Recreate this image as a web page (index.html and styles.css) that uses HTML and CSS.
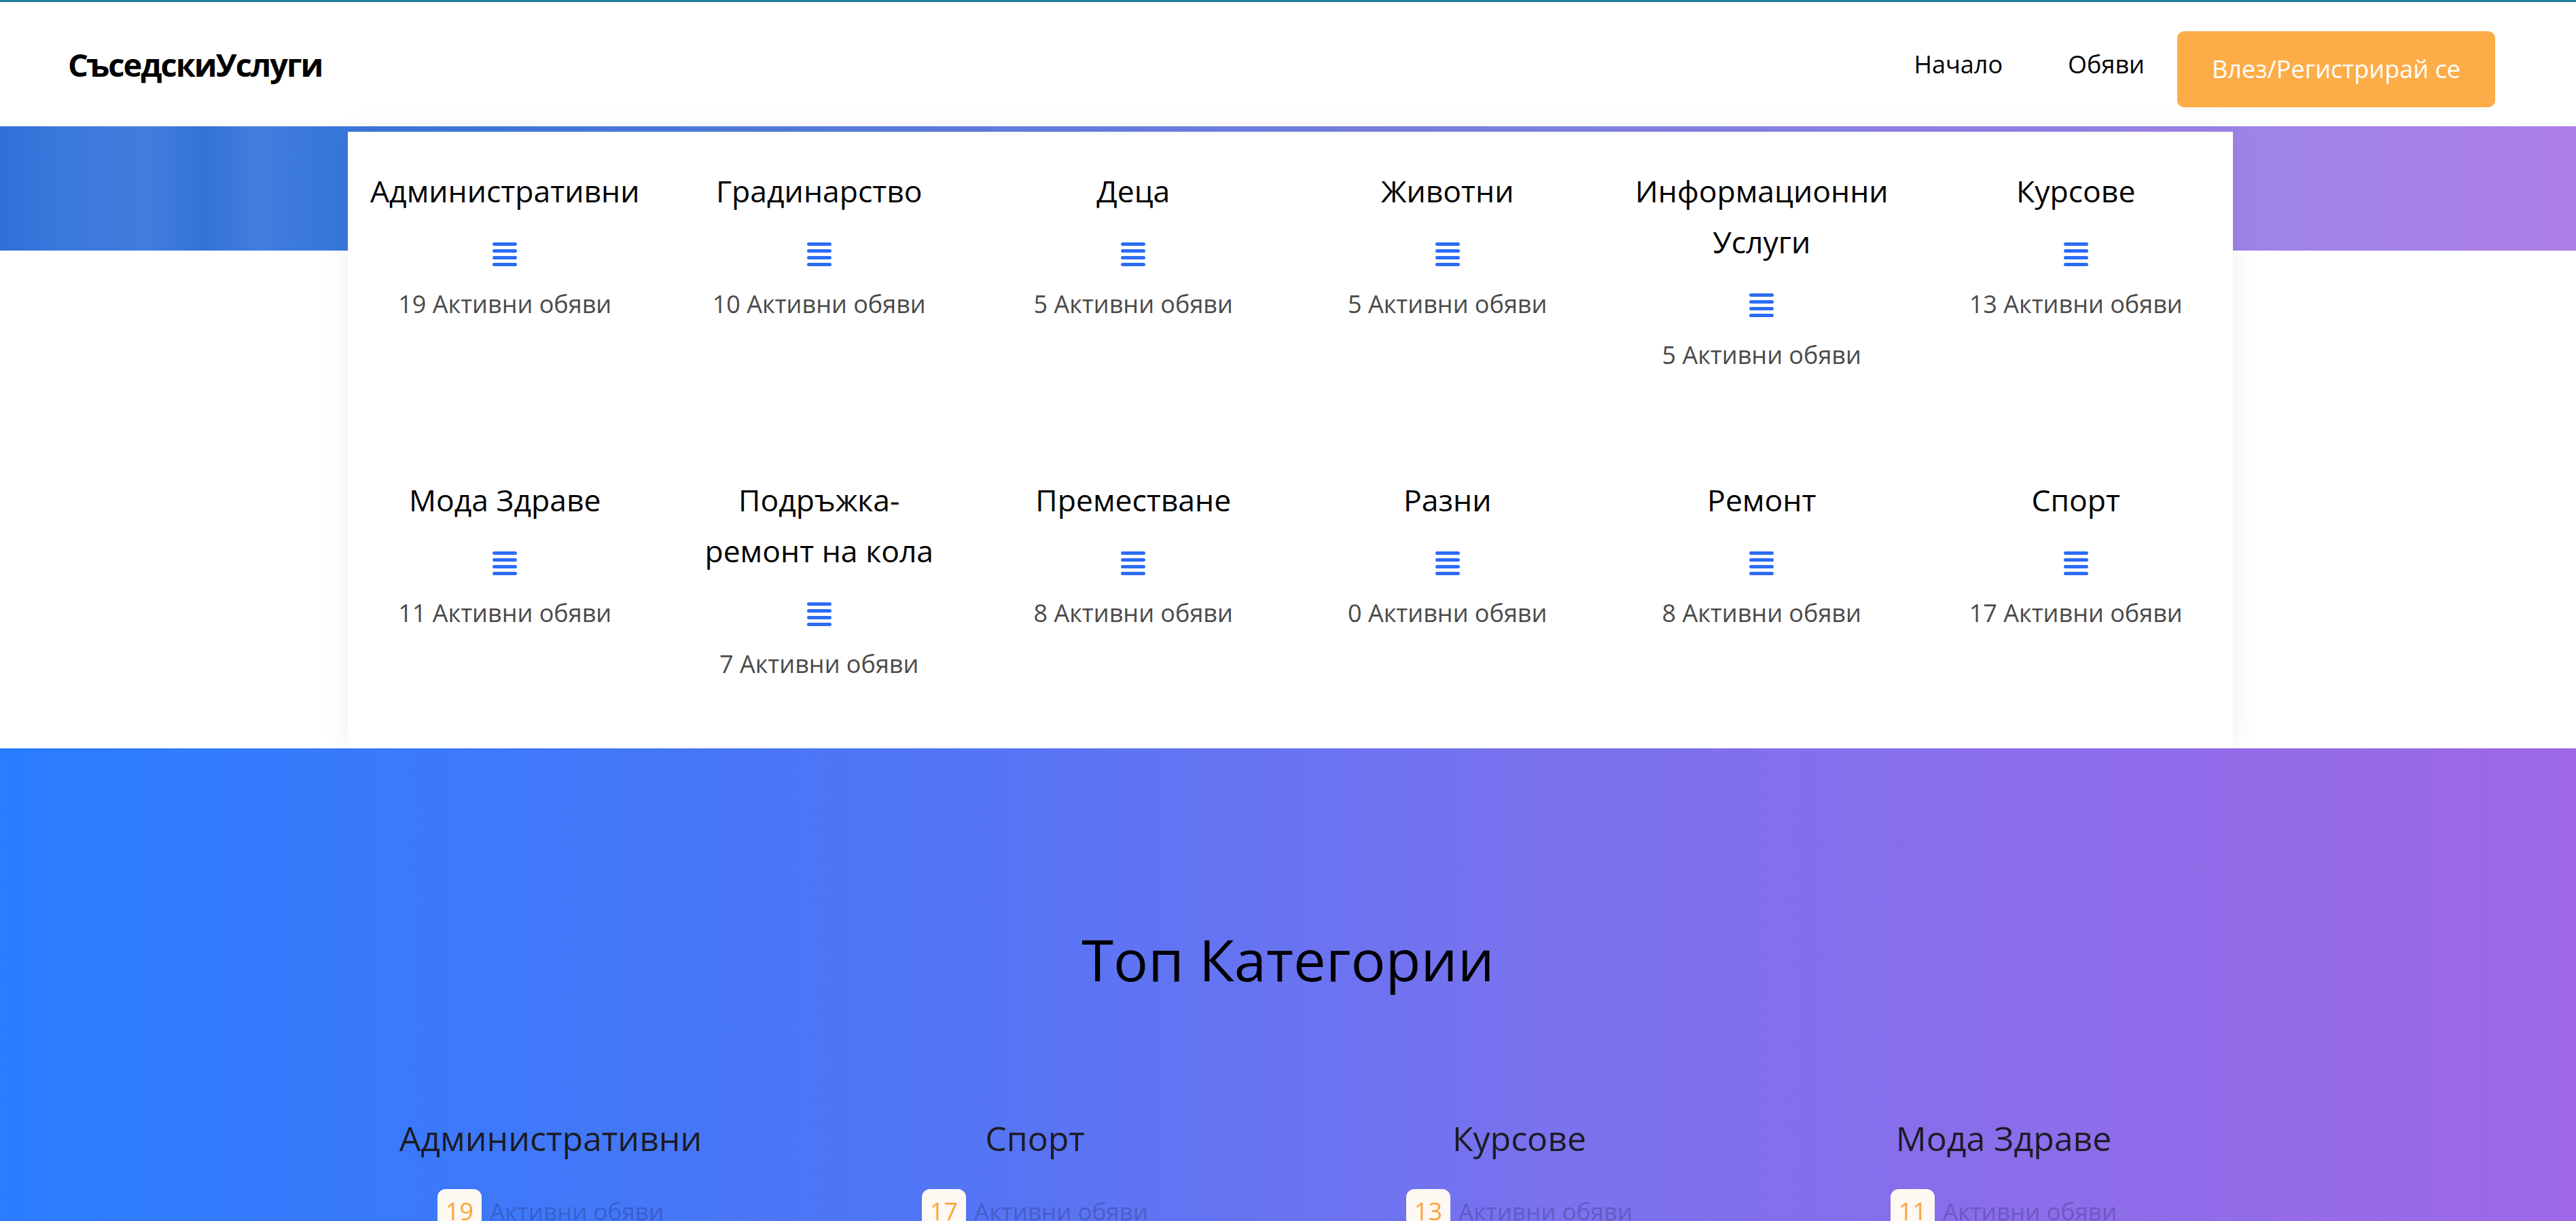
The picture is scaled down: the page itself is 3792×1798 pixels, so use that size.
FILE: index.html
```html
<!DOCTYPE html>
<html lang="bg">
<head>
<meta charset="utf-8">
<title>СъседскиУслуги</title>
<link rel="stylesheet" href="styles.css">
</head>
<body>
<header class="topbar">
  <a class="brand" href="#">СъседскиУслуги</a>
  <nav class="nav">
    <a class="nav-link" href="#">Начало</a>
    <a class="nav-link" href="#">Обяви</a>
    <a class="btn-login" href="#">Влез/Регистрирай се</a>
  </nav>
</header>

<section class="cats">
  <div class="cats-card">
    <div class="cat">
      <h3 class="cat-title">Административни</h3>
      <svg class="cat-icon" viewBox="0 0 36 36"><rect x="0" y="0" width="36" height="5" rx="2.5"/><rect x="0" y="10" width="36" height="5" rx="2.5"/><rect x="0" y="20" width="36" height="5" rx="2.5"/><rect x="0" y="30" width="36" height="5" rx="2.5"/></svg>
      <p class="cat-count">19 Активни обяви</p>
    </div>
    <div class="cat">
      <h3 class="cat-title">Градинарство</h3>
      <svg class="cat-icon" viewBox="0 0 36 36"><rect x="0" y="0" width="36" height="5" rx="2.5"/><rect x="0" y="10" width="36" height="5" rx="2.5"/><rect x="0" y="20" width="36" height="5" rx="2.5"/><rect x="0" y="30" width="36" height="5" rx="2.5"/></svg>
      <p class="cat-count">10 Активни обяви</p>
    </div>
    <div class="cat">
      <h3 class="cat-title">Деца</h3>
      <svg class="cat-icon" viewBox="0 0 36 36"><rect x="0" y="0" width="36" height="5" rx="2.5"/><rect x="0" y="10" width="36" height="5" rx="2.5"/><rect x="0" y="20" width="36" height="5" rx="2.5"/><rect x="0" y="30" width="36" height="5" rx="2.5"/></svg>
      <p class="cat-count">5 Активни обяви</p>
    </div>
    <div class="cat">
      <h3 class="cat-title">Животни</h3>
      <svg class="cat-icon" viewBox="0 0 36 36"><rect x="0" y="0" width="36" height="5" rx="2.5"/><rect x="0" y="10" width="36" height="5" rx="2.5"/><rect x="0" y="20" width="36" height="5" rx="2.5"/><rect x="0" y="30" width="36" height="5" rx="2.5"/></svg>
      <p class="cat-count">5 Активни обяви</p>
    </div>
    <div class="cat">
      <h3 class="cat-title">Информационни Услуги</h3>
      <svg class="cat-icon" viewBox="0 0 36 36"><rect x="0" y="0" width="36" height="5" rx="2.5"/><rect x="0" y="10" width="36" height="5" rx="2.5"/><rect x="0" y="20" width="36" height="5" rx="2.5"/><rect x="0" y="30" width="36" height="5" rx="2.5"/></svg>
      <p class="cat-count">5 Активни обяви</p>
    </div>
    <div class="cat">
      <h3 class="cat-title">Курсове</h3>
      <svg class="cat-icon" viewBox="0 0 36 36"><rect x="0" y="0" width="36" height="5" rx="2.5"/><rect x="0" y="10" width="36" height="5" rx="2.5"/><rect x="0" y="20" width="36" height="5" rx="2.5"/><rect x="0" y="30" width="36" height="5" rx="2.5"/></svg>
      <p class="cat-count">13 Активни обяви</p>
    </div>
    <div class="cat">
      <h3 class="cat-title">Мода Здраве</h3>
      <svg class="cat-icon" viewBox="0 0 36 36"><rect x="0" y="0" width="36" height="5" rx="2.5"/><rect x="0" y="10" width="36" height="5" rx="2.5"/><rect x="0" y="20" width="36" height="5" rx="2.5"/><rect x="0" y="30" width="36" height="5" rx="2.5"/></svg>
      <p class="cat-count">11 Активни обяви</p>
    </div>
    <div class="cat">
      <h3 class="cat-title">Подръжка-<br>ремонт на кола</h3>
      <svg class="cat-icon" viewBox="0 0 36 36"><rect x="0" y="0" width="36" height="5" rx="2.5"/><rect x="0" y="10" width="36" height="5" rx="2.5"/><rect x="0" y="20" width="36" height="5" rx="2.5"/><rect x="0" y="30" width="36" height="5" rx="2.5"/></svg>
      <p class="cat-count">7 Активни обяви</p>
    </div>
    <div class="cat">
      <h3 class="cat-title">Преместване</h3>
      <svg class="cat-icon" viewBox="0 0 36 36"><rect x="0" y="0" width="36" height="5" rx="2.5"/><rect x="0" y="10" width="36" height="5" rx="2.5"/><rect x="0" y="20" width="36" height="5" rx="2.5"/><rect x="0" y="30" width="36" height="5" rx="2.5"/></svg>
      <p class="cat-count">8 Активни обяви</p>
    </div>
    <div class="cat">
      <h3 class="cat-title">Разни</h3>
      <svg class="cat-icon" viewBox="0 0 36 36"><rect x="0" y="0" width="36" height="5" rx="2.5"/><rect x="0" y="10" width="36" height="5" rx="2.5"/><rect x="0" y="20" width="36" height="5" rx="2.5"/><rect x="0" y="30" width="36" height="5" rx="2.5"/></svg>
      <p class="cat-count">0 Активни обяви</p>
    </div>
    <div class="cat">
      <h3 class="cat-title">Ремонт</h3>
      <svg class="cat-icon" viewBox="0 0 36 36"><rect x="0" y="0" width="36" height="5" rx="2.5"/><rect x="0" y="10" width="36" height="5" rx="2.5"/><rect x="0" y="20" width="36" height="5" rx="2.5"/><rect x="0" y="30" width="36" height="5" rx="2.5"/></svg>
      <p class="cat-count">8 Активни обяви</p>
    </div>
    <div class="cat">
      <h3 class="cat-title">Спорт</h3>
      <svg class="cat-icon" viewBox="0 0 36 36"><rect x="0" y="0" width="36" height="5" rx="2.5"/><rect x="0" y="10" width="36" height="5" rx="2.5"/><rect x="0" y="20" width="36" height="5" rx="2.5"/><rect x="0" y="30" width="36" height="5" rx="2.5"/></svg>
      <p class="cat-count">17 Активни обяви</p>
    </div>
  </div>
</section>

<section class="top">
  <h2 class="top-title">Топ Категории</h2>
  <div class="top-grid">
    <div class="top-item">
      <h4 class="top-name">Административни</h4>
      <div class="top-meta"><span class="badge">19</span><span class="meta-text">Активни обяви</span></div>
    </div>
    <div class="top-item">
      <h4 class="top-name">Спорт</h4>
      <div class="top-meta"><span class="badge">17</span><span class="meta-text">Активни обяви</span></div>
    </div>
    <div class="top-item">
      <h4 class="top-name">Курсове</h4>
      <div class="top-meta"><span class="badge">13</span><span class="meta-text">Активни обяви</span></div>
    </div>
    <div class="top-item">
      <h4 class="top-name">Мода Здраве</h4>
      <div class="top-meta"><span class="badge">11</span><span class="meta-text">Активни обяви</span></div>
    </div>
  </div>
</section>
</body>
</html>
```

FILE: styles.css
```css
* { box-sizing: border-box; }

html, body {
  margin: 0;
  padding: 0;
  background: #fff;
  font-family: "Open Sans", "Noto Sans", sans-serif;
  color: #000;
}

a { text-decoration: none; color: inherit; }

/* ---------- header ---------- */
.topbar {
  height: 186px;
  border-top: 3px solid #1f7f9c;
  display: flex;
  align-items: center;
  justify-content: space-between;
  padding: 0 119px 0 100px;
  background: #fff;
}

.brand {
  font-size: 47px;
  font-weight: 700;
  color: #000;
  letter-spacing: -2px;
}

.nav {
  display: flex;
  align-items: center;
}

.nav-link {
  font-size: 36px;
  color: #000;
  padding: 0 48px;
}

.btn-login {
  display: flex;
  align-items: center;
  justify-content: center;
  width: 468px;
  height: 112px;
  margin-top: 14px;
  background: #fdad48;
  color: #fff;
  font-size: 36px;
  border-radius: 10px;
}

/* ---------- categories ---------- */
.cats {
  padding-top: 8px;
  background:
    linear-gradient(90deg,
      rgba(255,255,255,0) 0px,
      rgba(255,255,255,.05) 90px,
      rgba(255,255,255,.07) 220px,
      rgba(0,0,0,.02) 300px,
      rgba(255,255,255,.06) 380px,
      rgba(255,255,255,0) 470px) 0 0 / 100% 183px no-repeat,
    linear-gradient(90deg, #2e70d9 0%, #3a78dc 14%, #7a82e4 55%, #9f84e8 88%, #ad7fe6 100%) 0 0 / 100% 183px no-repeat,
    #fff;
}

.cats-card {
  width: 2775px;
  margin: 0 0 0 512px;
  background: #fff;
  box-shadow: 0 0 40px rgba(0, 0, 0, 0.07);
  display: grid;
  grid-template-columns: repeat(6, 1fr);
  row-gap: 148px;
  padding: 49px 0 97px;
}

.cat {
  display: flex;
  flex-direction: column;
  align-items: center;
  text-align: center;
  padding: 0 10px;
}

.cat-title {
  margin: 0;
  font-size: 44.5px;
  font-weight: 400;
  line-height: 75px;
  color: #000;
}

.cat-icon {
  display: block;
  width: 36px;
  height: 36px;
  margin-top: 39px;
  fill: #2c6cf5;
}

.cat-count {
  margin: 28px 0 0;
  font-size: 36px;
  line-height: 54px;
  color: #4a4a4a;
}

/* ---------- top categories ---------- */
.top {
  background: linear-gradient(90deg, #2a7dff 0%, #4f75f5 35%, #7a72ee 60%, #9e68e6 100%);
  padding: 259px 0 300px;
}

.top-title {
  margin: 0;
  text-align: center;
  font-size: 85px;
  font-weight: 400;
  line-height: 1.2;
  color: #000;
}

.top-grid {
  display: grid;
  grid-template-columns: repeat(4, 713px);
  margin: 183px 0 0 454px;
}

.top-item {
  display: flex;
  flex-direction: column;
  align-items: center;
}

.top-name {
  margin: 0;
  font-size: 50px;
  font-weight: 400;
  line-height: 1.2;
  color: #1c1c24;
}

.top-meta {
  display: flex;
  align-items: flex-start;
  margin-top: 45px;
}

.badge {
  background: #fff9f4;
  color: #f8a53c;
  font-size: 36px;
  line-height: 54px;
  padding: 6px 12px;
  border-radius: 12px;
}

.meta-text {
  margin-left: 12px;
  padding-top: 6px;
  font-size: 35px;
  line-height: 54px;
  color: rgba(20, 20, 70, 0.25);
}
```
